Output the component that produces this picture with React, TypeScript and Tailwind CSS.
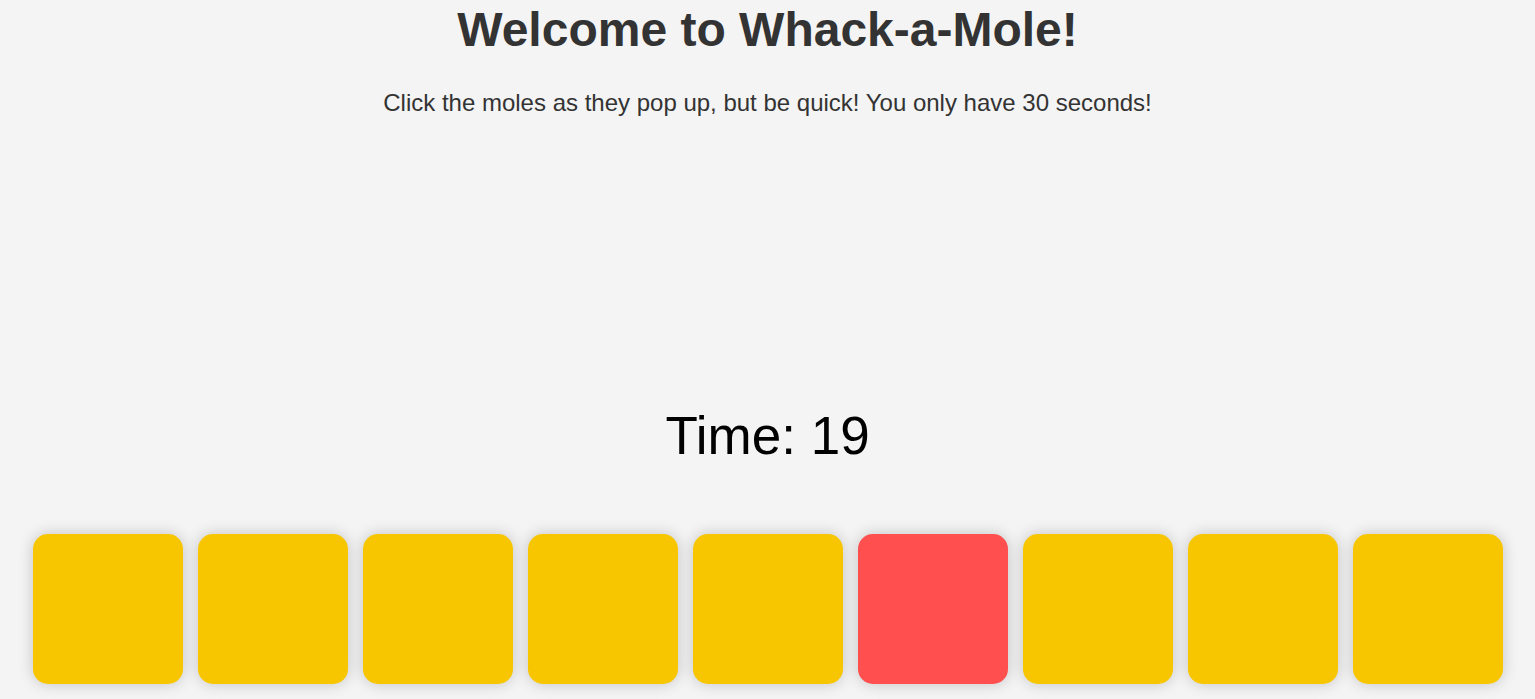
export default function App() {
  const active = 5
  const holes = Array.from({ length: 9 }, (_, i) => i)

  return (
    <div className="min-h-screen bg-[#f4f4f4] text-center font-['Liberation_Sans',Arial,sans-serif]">
      <h1 className="pt-[2px] text-[48px] font-bold leading-[56px] text-[#333]">
        Welcome to Whack-a-Mole!
      </h1>
      <p className="mt-[31px] text-[24px] leading-[28px] text-[#333]">
        Click the moles as they pop up, but be quick! You only have 30 seconds!
      </p>

      {/* empty play area above the timer */}
      <div className="h-[289px]" />

      <div className="text-[53px] leading-[60px] text-black">Time: 19</div>

      <div className="mt-[68px] flex justify-center gap-[15px] pb-[15px]">
        {holes.map((i) => (
          <div
            key={i}
            className={`h-[150px] w-[150px] rounded-[15px] shadow-[0_0_15px_rgba(0,0,0,0.2)] ${
              i === active ? 'bg-[#ff4f4f]' : 'bg-[#f7c600]'
            }`}
          />
        ))}
      </div>
    </div>
  )
}
